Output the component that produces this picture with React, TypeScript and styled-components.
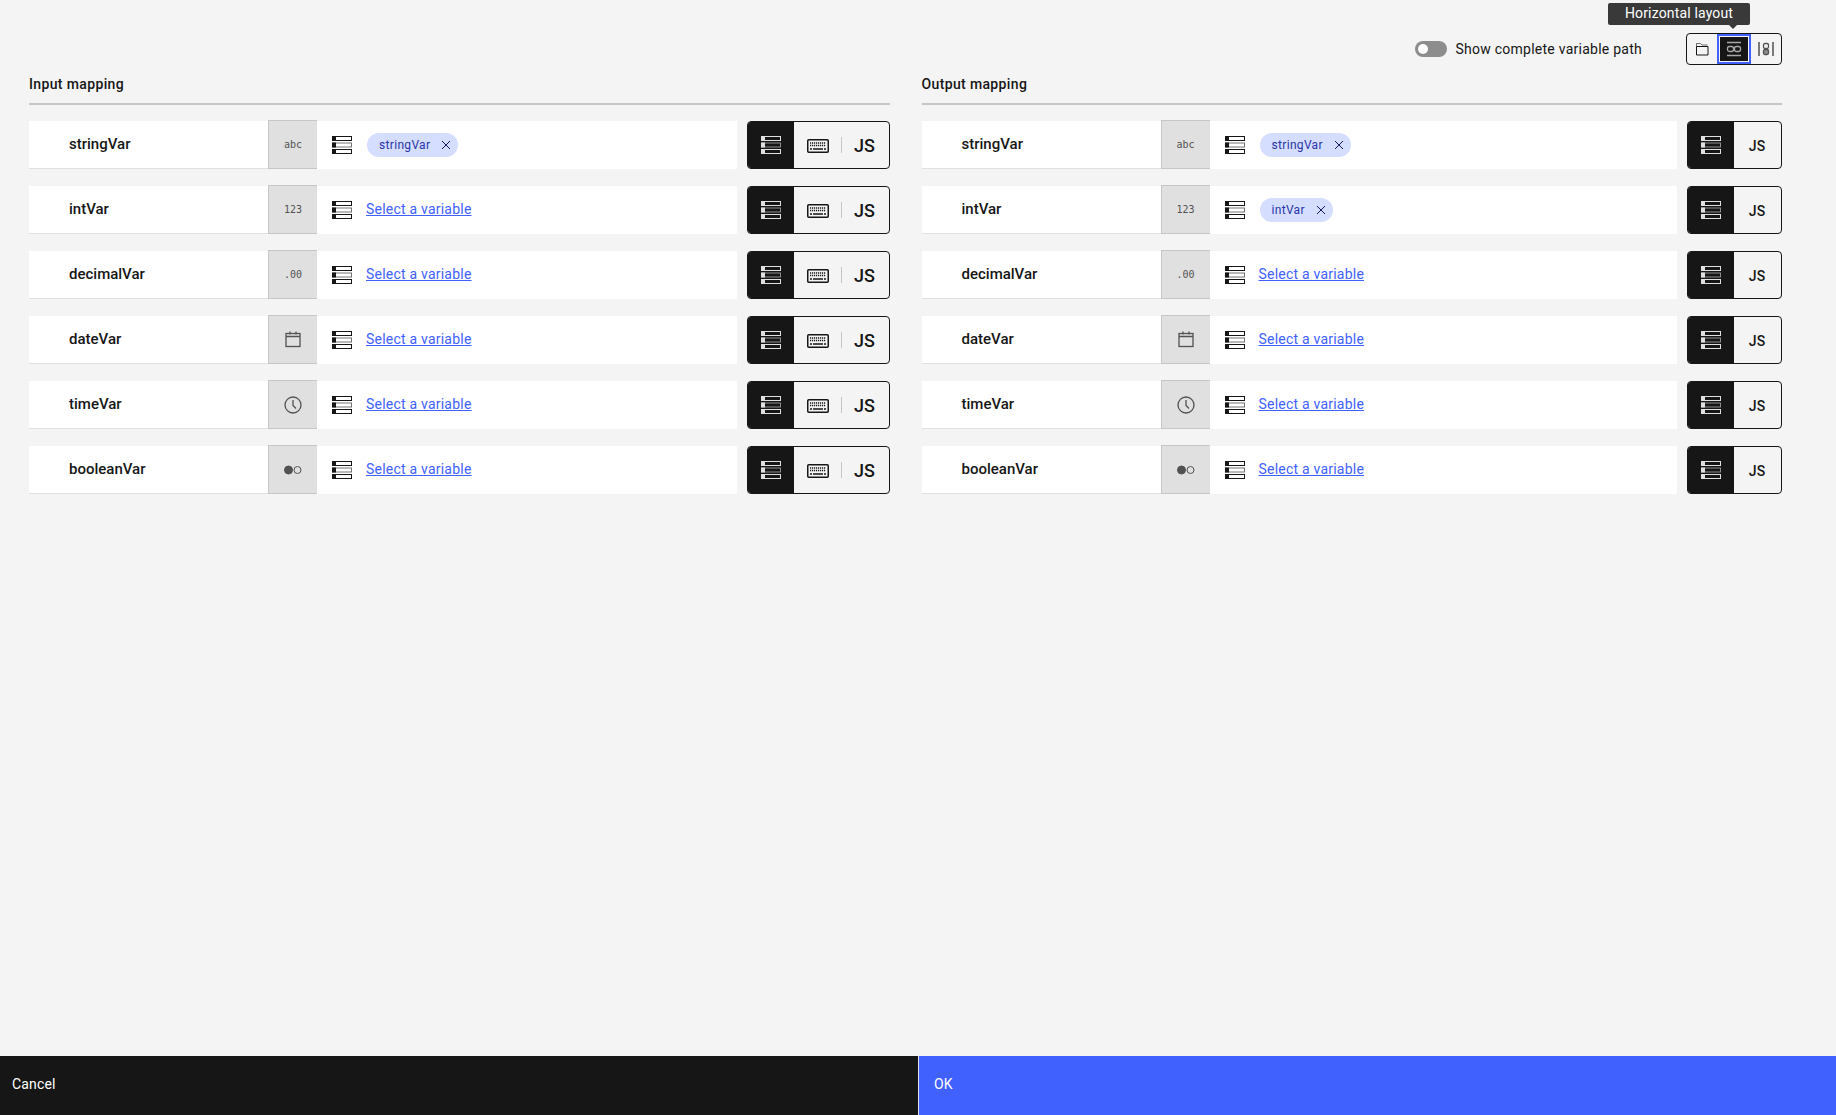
import React from "react";
import styled, { createGlobalStyle } from "styled-components";

const GlobalStyle = createGlobalStyle`
  html, body {
    margin: 0;
    padding: 0;
    background: #f4f4f4;
  }
  * {
    box-sizing: border-box;
  }
`;

const Page = styled.div`
  height: 100vh;
  display: flex;
  flex-direction: column;
  font-family: "Roboto", "Liberation Sans", sans-serif;
  color: #161616;
`;

const Content = styled.div`
  flex: 1;
  padding: 33px 54px 0 29px;
`;

const Toolbar = styled.div`
  display: flex;
  justify-content: flex-end;
  align-items: center;
  height: 32px;
`;

const ToggleWrap = styled.div`
  display: flex;
  align-items: center;
  gap: 9px;
  margin-right: 44px;
  font-size: 14px;
  letter-spacing: 0.25px;
`;

const Track = styled.span`
  position: relative;
  display: block;
  width: 32px;
  height: 16px;
  border-radius: 8px;
  background: #8d8d8d;
`;

const Knob = styled.span`
  position: absolute;
  top: 3px;
  left: 3px;
  width: 10px;
  height: 10px;
  border-radius: 50%;
  background: #fff;
`;

const LayoutGroup = styled.div`
  position: relative;
  display: flex;
  width: 96px;
  height: 32px;
  border: 1px solid #161616;
  border-radius: 4px;
`;

const LayoutButton = styled.button<{ $active?: boolean }>`
  flex: 1;
  padding: 0;
  display: flex;
  align-items: center;
  justify-content: center;
  background: ${(p) => (p.$active ? "#161616" : "transparent")};
  border: ${(p) => (p.$active ? "2px solid #4161ff" : "none")};
  box-shadow: ${(p) => (p.$active ? "inset 0 0 0 1px #f4f4f4" : "none")};
  color: ${(p) => (p.$active ? "#a8a8a8" : "#161616")};
`;

const Tooltip = styled.div`
  position: absolute;
  top: -31px;
  left: -79px;
  width: 142px;
  height: 22px;
  background: #393939;
  color: #fff;
  border-radius: 2px;
  font-size: 14px;
  letter-spacing: 0.16px;
  line-height: 21px;
  text-align: center;

  &::after {
    content: "";
    position: absolute;
    left: 121px;
    bottom: -4px;
    border-left: 4px solid transparent;
    border-right: 4px solid transparent;
    border-top: 4px solid #393939;
  }
`;

const Columns = styled.div`
  display: grid;
  grid-template-columns: 861px 860.5px;
  column-gap: 31.5px;
  margin-top: 7px;
`;

const Heading = styled.h4`
  margin: 0;
  height: 33px;
  padding-top: 3px;
  font-size: 14px;
  line-height: 18px;
  font-weight: 500;
  letter-spacing: 0.36px;
  border-bottom: 2px solid #c6c6c6;
`;

const Rows = styled.div`
  display: flex;
  flex-direction: column;
  gap: 17px;
  margin-top: 16px;
`;

const Row = styled.div`
  display: flex;
  height: 48px;
`;

const NameCell = styled.div`
  width: 239px;
  padding-left: 40px;
  display: flex;
  align-items: center;
  background: #fff;
  border-bottom: 1px solid #e0e0e0;
  font-size: 15px;
  font-weight: 500;
  padding-bottom: 2px;
`;

const TypeCell = styled.div`
  width: 49px;
  margin-top: -1px;
  display: flex;
  align-items: center;
  justify-content: center;
  background: #e0e0e0;
  border: 1px solid #c6c6c6;
  border-width: 1px 0 1px 1px;
  color: #525252;
  font-family: "DejaVu Sans Mono", monospace;
  font-size: 10px;
`;

const ValueCell = styled.div`
  flex: 1;
  display: flex;
  align-items: center;
  gap: 14px;
  padding-left: 15px;
  background: #fff;
  color: #161616;
`;

const SelectLink = styled.a`
  margin-bottom: 2px;
  font-size: 14px;
  letter-spacing: 0.22px;
  color: #4161ff;
  text-decoration: underline;
  cursor: pointer;
`;

const Tag = styled.span`
  display: inline-flex;
  align-items: center;
  height: 24px;
  padding: 0 7px 1px 12px;
  gap: 11px;
  margin-left: 1px;
  border-radius: 12px;
  background: #d5deff;
  color: #2a35a8;
  font-size: 12px;
  letter-spacing: 0.32px;
`;

const Switcher = styled.div<{ $wide?: boolean }>`
  display: flex;
  margin-left: 10px;
  width: ${(p) => (p.$wide ? "143px" : "95px")};
  border: 1px solid #161616;
  border-radius: 4px;
  overflow: hidden;
`;

const SwitchActive = styled.div`
  width: 46px;
  display: flex;
  align-items: center;
  justify-content: center;
  background: #161616;
  color: #e0e0e0;
`;

const SwitchOption = styled.div`
  flex: 1;
  display: flex;
  align-items: center;
  justify-content: center;
  padding-top: 1px;
`;

const SwitchSep = styled.span`
  align-self: center;
  width: 1px;
  height: 16px;
  background: #c6c6c6;
`;

const JsLabel = styled.span<{ $large?: boolean }>`
  font-size: ${(p) => (p.$large ? "18px" : "14px")};
  font-weight: 500;
  margin-right: ${(p) => (p.$large ? "2px" : "1px")};
`;

const Footer = styled.div`
  display: flex;
  height: 59px;
`;

const FooterButton = styled.div<{ $primary?: boolean }>`
  flex: ${(p) => (p.$primary ? "1" : "0 0 918px")};
  display: flex;
  align-items: center;
  padding-left: ${(p) => (p.$primary ? "15px" : "12px")};
  padding-bottom: 4px;
  background: ${(p) => (p.$primary ? "#4161ff" : "#161616")};
  border-left: ${(p) => (p.$primary ? "1px solid #e0e0e0" : "none")};
  color: #fff;
  font-size: 14px;
  letter-spacing: 0.16px;
`;

const VariableIcon = () => (
  <svg width="20" height="18" viewBox="0 0 20 18" fill="none">
    <g stroke="currentColor" strokeWidth="1">
      <rect x="0.5" y="0.5" width="19" height="4" />
      <rect x="0.5" y="13.5" width="19" height="4" />
    </g>
    <rect x="0.5" y="7" width="19" height="4" stroke="currentColor" strokeOpacity="0.6" />
    <rect x="0" y="0" width="4" height="5" fill="currentColor" />
    <rect x="0" y="6.5" width="4" height="5" fill="currentColor" />
    <rect x="0" y="13" width="4" height="5" fill="currentColor" />
  </svg>
);

const KeyboardIcon = () => (
  <svg width="22" height="14" viewBox="0 0 22 14" fill="none">
    <rect x="0.75" y="0.75" width="20.5" height="12.5" rx="1" stroke="currentColor" strokeWidth="1.5" />
    <path d="M3 4h16M3 6.5h16" stroke="currentColor" strokeWidth="1.5" strokeDasharray="1.2 0.8" />
    <path d="M3 10h2M6 10h10M17 10h2" stroke="currentColor" strokeWidth="1.5" />
  </svg>
);

const FolderIcon = () => (
  <svg width="14" height="14" viewBox="0 0 14 14" fill="none" stroke="currentColor">
    <path d="M1.5 4.5h11.5v8.5h-11.5z" />
    <path d="M1.5 4.5v-3h4l1.5 1.5h5.5" strokeOpacity="0.6" />
  </svg>
);

const HorizontalIcon = () => (
  <svg width="16" height="16" viewBox="0 0 16 16" fill="none" stroke="currentColor">
    <path d="M1 1.5h14M1 14.5h14" strokeWidth="1.5" />
    <rect x="1.5" y="5.5" width="6" height="5" rx="2" strokeWidth="1.3" />
    <rect x="8.5" y="5.5" width="6" height="5" rx="2" strokeWidth="1.3" />
  </svg>
);

const VerticalIcon = () => (
  <svg width="16" height="16" viewBox="0 0 16 16" fill="none" stroke="#525252">
    <path d="M1 1v14M15 1v14" strokeWidth="1.5" />
    <rect x="5.5" y="2.5" width="5" height="5" rx="1.5" strokeWidth="1.3" />
    <rect x="5.5" y="8.5" width="5" height="5" rx="1.5" fill="#8d8d8d" strokeWidth="1.3" />
  </svg>
);

const CloseIcon = () => (
  <svg width="10" height="10" viewBox="0 0 10 10" stroke="#161665" strokeWidth="1">
    <path d="M1 1l8 8M9 1l-8 8" />
  </svg>
);

const CalendarIcon = () => (
  <svg width="16" height="17" viewBox="0 0 16 17" fill="none" stroke="currentColor" strokeWidth="1.3">
    <rect x="1" y="2.5" width="14" height="13" />
    <path d="M1 5.5h14M5 0.5v3M11 0.5v3" />
  </svg>
);

const ClockIcon = () => (
  <svg width="18" height="18" viewBox="0 0 18 18" fill="none" stroke="currentColor" strokeWidth="1.3">
    <circle cx="9" cy="9" r="8" />
    <path d="M9 4v5.5l3 3" />
  </svg>
);

const BooleanIcon = () => (
  <svg width="18" height="10" viewBox="0 0 18 10" fill="none" stroke="currentColor">
    <circle cx="4.5" cy="5" r="4" fill="currentColor" />
    <circle cx="13.5" cy="5" r="3.5" />
  </svg>
);

const typeSymbols: Record<string, React.ReactNode> = {
  stringVar: "abc",
  intVar: "123",
  decimalVar: ".00",
  dateVar: <CalendarIcon />,
  timeVar: <ClockIcon />,
  booleanVar: <BooleanIcon />,
};

const variables = Object.keys(typeSymbols);

type ColumnProps = {
  title: string;
  tagged: string[];
  withKeyboard?: boolean;
};

const MappingColumn: React.FC<ColumnProps> = ({ title, tagged, withKeyboard }) => (
  <section>
    <Heading>{title}</Heading>
    <Rows>
      {variables.map((name) => (
        <Row key={name}>
          <NameCell>{name}</NameCell>
          <TypeCell>{typeSymbols[name]}</TypeCell>
          <ValueCell>
            <VariableIcon />
            {tagged.includes(name) ? (
              <Tag>
                {name}
                <CloseIcon />
              </Tag>
            ) : (
              <SelectLink>Select a variable</SelectLink>
            )}
          </ValueCell>
          <Switcher $wide={withKeyboard}>
            <SwitchActive>
              <VariableIcon />
            </SwitchActive>
            {withKeyboard ? (
              <>
                <SwitchOption>
                  <KeyboardIcon />
                </SwitchOption>
                <SwitchSep />
                <SwitchOption>
                  <JsLabel $large>JS</JsLabel>
                </SwitchOption>
              </>
            ) : (
              <SwitchOption>
                <JsLabel>JS</JsLabel>
              </SwitchOption>
            )}
          </Switcher>
        </Row>
      ))}
    </Rows>
  </section>
);

const App: React.FC = () => (
  <Page>
    <GlobalStyle />
    <Content>
      <Toolbar>
        <ToggleWrap>
          <Track>
            <Knob />
          </Track>
          Show complete variable path
        </ToggleWrap>
        <LayoutGroup>
          <Tooltip>Horizontal layout</Tooltip>
          <LayoutButton>
            <FolderIcon />
          </LayoutButton>
          <LayoutButton $active>
            <HorizontalIcon />
          </LayoutButton>
          <LayoutButton>
            <VerticalIcon />
          </LayoutButton>
        </LayoutGroup>
      </Toolbar>
      <Columns>
        <MappingColumn title="Input mapping" tagged={["stringVar"]} withKeyboard />
        <MappingColumn title="Output mapping" tagged={["stringVar", "intVar"]} />
      </Columns>
    </Content>
    <Footer>
      <FooterButton>Cancel</FooterButton>
      <FooterButton $primary>OK</FooterButton>
    </Footer>
  </Page>
);

export default App;
